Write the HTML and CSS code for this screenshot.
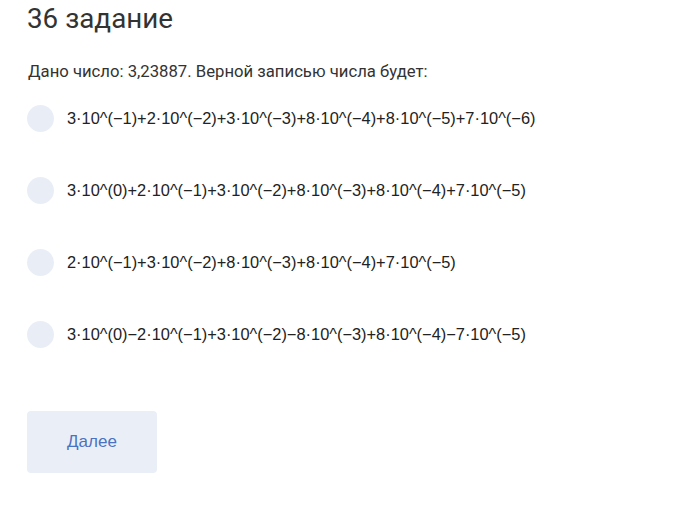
FILE: index.html
```html
<!DOCTYPE html>
<html lang="ru">
<head>
<meta charset="utf-8">
<link rel="stylesheet" href="styles.css">
</head>
<body>
<div class="page">
  <h1 class="title">36 задание</h1>
  <p class="question">Дано число: 3,23887. Верной записью числа будет:</p>
  <div class="options">
    <label class="option"><span class="radio"></span><span class="text">3·10^(−1)+2·10^(−2)+3·10^(−3)+8·10^(−4)+8·10^(−5)+7·10^(−6)</span></label>
    <label class="option"><span class="radio"></span><span class="text">3·10^(0)+2·10^(−1)+3·10^(−2)+8·10^(−3)+8·10^(−4)+7·10^(−5)</span></label>
    <label class="option"><span class="radio"></span><span class="text">2·10^(−1)+3·10^(−2)+8·10^(−3)+8·10^(−4)+7·10^(−5)</span></label>
    <label class="option"><span class="radio"></span><span class="text">3·10^(0)−2·10^(−1)+3·10^(−2)−8·10^(−3)+8·10^(−4)−7·10^(−5)</span></label>
  </div>
  <button class="next">Далее</button>
</div>
</body>
</html>
```
FILE: styles.css
```css
html, body { margin: 0; padding: 0; background: #fff; }
.page { padding: 0 0 0 27px; color: #333; }
.title {
  margin: 0;
  padding-top: 2px;
  font-family: Roboto, "Liberation Sans", sans-serif;
  font-weight: 400;
  font-size: 27.8px;
  line-height: 34px;
  color: #333;
}
.question {
  margin: 26px 0 0 1px;
  font-family: Roboto, "Liberation Sans", sans-serif;
  font-size: 16.7px;
  line-height: 20px;
  color: #333;
}
.options { margin-top: 23px; display: flex; flex-direction: column; gap: 45px; }
.option { display: flex; align-items: center; gap: 13px; height: 27px; }
.radio { width: 27px; height: 27px; border-radius: 50%; background: #e9eef6; flex: none; }
.text {
  font-family: "Liberation Sans", Arial, sans-serif;
  font-size: 16.4px;
  color: #222;
}
.next {
  margin-top: 63px;
  width: 130px; height: 62px;
  border: none; border-radius: 4px;
  background: #eaeff7;
  color: #4b72c2;
  font-family: "Liberation Sans", Arial, sans-serif;
  font-size: 17px;
  cursor: pointer;
}
```
